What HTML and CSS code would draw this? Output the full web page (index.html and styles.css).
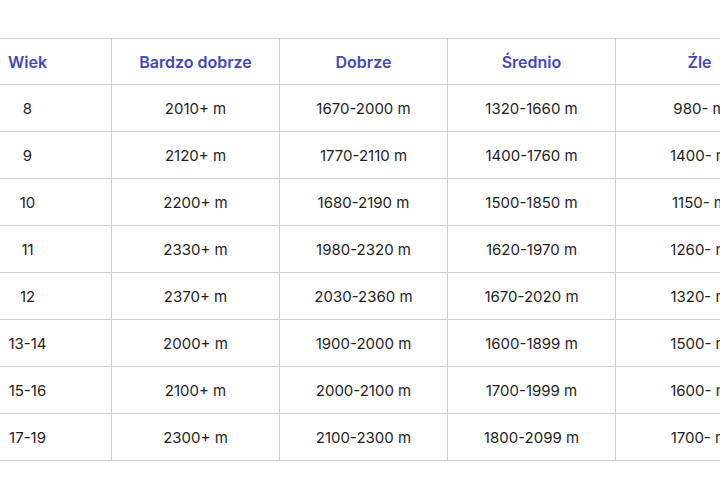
FILE: index.html
```html
<!DOCTYPE html>
<html lang="pl">
<head>
<meta charset="utf-8">
<link rel="stylesheet" href="styles.css">
</head>
<body>
<div class="wrap">
<table class="norms">
<thead>
<tr><th>Wiek</th><th>Bardzo dobrze</th><th>Dobrze</th><th>Średnio</th><th>Źle</th></tr>
</thead>
<tbody>
<tr><td>8</td><td>2010+ m</td><td>1670-2000 m</td><td>1320-1660 m</td><td>980- m</td></tr>
<tr><td>9</td><td>2120+ m</td><td>1770-2110 m</td><td>1400-1760 m</td><td>1400- m</td></tr>
<tr><td>10</td><td>2200+ m</td><td>1680-2190 m</td><td>1500-1850 m</td><td>1150- m</td></tr>
<tr><td>11</td><td>2330+ m</td><td>1980-2320 m</td><td>1620-1970 m</td><td>1260- m</td></tr>
<tr><td>12</td><td>2370+ m</td><td>2030-2360 m</td><td>1670-2020 m</td><td>1320- m</td></tr>
<tr><td>13-14</td><td>2000+ m</td><td>1900-2000 m</td><td>1600-1899 m</td><td>1500- m</td></tr>
<tr><td>15-16</td><td>2100+ m</td><td>2000-2100 m</td><td>1700-1999 m</td><td>1600- m</td></tr>
<tr><td>17-19</td><td>2300+ m</td><td>2100-2300 m</td><td>1800-2099 m</td><td>1700- m</td></tr>
</tbody>
</table>
</div>
</body>
</html>
```
FILE: styles.css
```css
html, body {
  margin: 0;
  padding: 0;
  background: #fff;
}
body {
  font-family: Inter, "Noto Sans", sans-serif;
  color: #1e1e1e;
  overflow: hidden;
}
.wrap {
  padding-top: 38px;
  overflow: hidden;
  width: 720px;
}
.norms {
  border-collapse: collapse;
  margin-left: -57px;
  table-layout: fixed;
  width: 840px;
}
.norms th, .norms td {
  width: 167px;
  border: 1px solid #cfcfcf;
  text-align: center;
  padding: 0;
  white-space: nowrap;
}
.norms th {
  height: 45px;
  color: #4248b8;
  font-weight: 600;
  font-size: 16px;
}
.norms td {
  height: 46px;
  font-weight: 400;
  font-size: 15px;
}
```
